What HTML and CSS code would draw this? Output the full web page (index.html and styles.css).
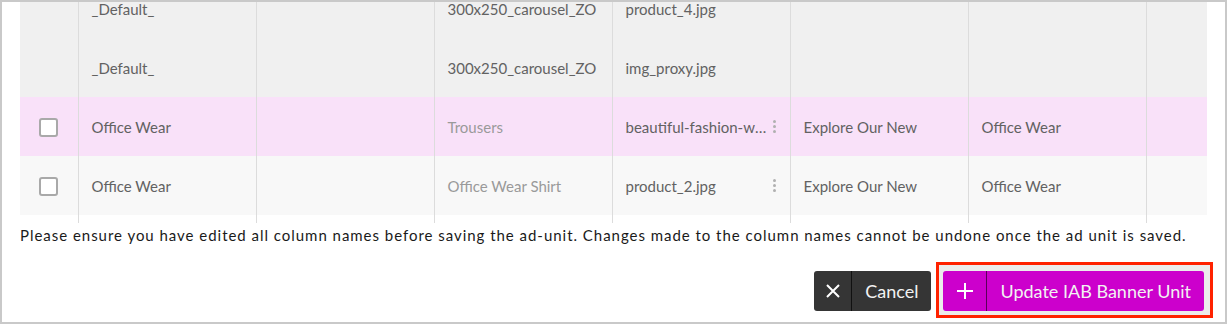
FILE: index.html
```html
<!DOCTYPE html>
<html>
<head>
<meta charset="utf-8">
<link rel="stylesheet" href="styles.css">
</head>
<body>
<div class="frame">
  <div class="table-wrap">
    <table class="grid">
      <colgroup>
        <col class="c-check"><col class="c-std"><col class="c-std"><col class="c-std"><col class="c-std"><col class="c-std"><col class="c-std"><col class="c-std">
      </colgroup>
      <tbody>
        <tr class="row-grey">
          <td></td><td>_Default_</td><td></td><td>300x250_carousel_ZO</td><td>product_4.jpg</td><td></td><td></td><td></td>
        </tr>
        <tr class="row-grey">
          <td></td><td>_Default_</td><td></td><td>300x250_carousel_ZO</td><td>img_proxy.jpg</td><td></td><td></td><td></td>
        </tr>
        <tr class="row-pink">
          <td class="check-cell"><span class="checkbox"></span></td>
          <td>Office Wear</td>
          <td></td>
          <td class="muted">Trousers</td>
          <td><div class="file"><span class="file-name">beautiful-fashion-woman-office-wear.jpg</span><span class="kebab"><i></i><i></i><i></i></span></div></td>
          <td>Explore Our New</td>
          <td>Office Wear</td>
          <td></td>
        </tr>
        <tr class="row-light">
          <td class="check-cell"><span class="checkbox"></span></td>
          <td>Office Wear</td>
          <td></td>
          <td class="muted">Office Wear Shirt</td>
          <td><div class="file"><span class="file-name">product_2.jpg</span><span class="kebab"><i></i><i></i><i></i></span></div></td>
          <td>Explore Our New</td>
          <td>Office Wear</td>
          <td></td>
        </tr>
        <tr class="row-spacer">
          <td></td><td></td><td></td><td></td><td></td><td></td><td></td><td></td>
        </tr>
      </tbody>
    </table>
  </div>
  <p class="notice">Please ensure you have edited all column names before saving the ad-unit. Changes made to the column names cannot be undone once the ad unit is saved.</p>
  <div class="actions">
    <button class="btn btn-dark">
      <span class="btn-icon">
        <svg width="14" height="14" viewBox="0 0 14 14"><path d="M1 1L13 13M13 1L1 13" stroke="#fff" stroke-width="2" fill="none"/></svg>
      </span>
      <span class="btn-label">Cancel</span>
    </button>
    <div class="highlight">
      <button class="btn btn-magenta">
        <span class="btn-icon btn-icon-wide">
          <svg width="18" height="18" viewBox="0 0 18 18"><path d="M9 1V17M1 9H17" stroke="#fff" stroke-width="2" fill="none"/></svg>
        </span>
        <span class="btn-label">Update IAB Banner Unit</span>
      </button>
    </div>
  </div>
</div>
</body>
</html>
```
FILE: styles.css
```css
* { box-sizing: border-box; }
html, body { margin: 0; padding: 0; background: #fff; }
body { font-family: "Lato", "Liberation Sans", sans-serif; }

.frame {
  width: 1227px;
  height: 324px;
  border: 2px solid #c9c9c9;
  padding: 0 18px;
  display: flex;
  flex-direction: column;
  overflow: hidden;
}

.table-wrap {
  width: 1187px;
  height: 222px;
  overflow: hidden;
  flex: none;
}

.grid {
  border-collapse: collapse;
  table-layout: fixed;
  width: 1304px;
  margin-top: -23px;
  font-size: 15px;
  color: #626262;
}
.c-check { width: 58px; }
.c-std { width: 178px; }

.grid td {
  height: 59px;
  padding: 0 13px;
  border-left: 1px solid #dcdcdc;
  white-space: nowrap;
  overflow: hidden;
  vertical-align: middle;
}
.grid td:first-child { border-left: none; }

.row-grey td { background: #f0f0f0; }
.row-pink td { background: #f9e1f9; }
.row-light td { background: #f8f8f8; }
.row-spacer td { height: 8px; background: #fff; }

.muted { color: #9a9a9a; }

.check-cell { text-align: center; padding: 0 !important; }
.checkbox {
  display: inline-block;
  width: 19px;
  height: 19px;
  border: 2px solid #a9a9a9;
  border-radius: 3px;
  background: #fff;
  vertical-align: middle;
}

.file {
  display: flex;
  align-items: center;
  gap: 5px;
}
.file-name {
  flex: 1;
  min-width: 0;
  overflow: hidden;
  text-overflow: ellipsis;
  white-space: nowrap;
}
.kebab {
  display: flex;
  flex-direction: column;
  gap: 2px;
  width: 3px;
  margin-right: 1px;
}
.kebab i {
  display: block;
  width: 3px;
  height: 3px;
  border-radius: 50%;
  background: #b0b0b0;
}

.notice {
  margin: 1px 0 0 0;
  font-size: 15px;
  line-height: 20px;
  color: #1a1a1a;
  letter-spacing: 0.97px;
  white-space: nowrap;
}

.actions {
  display: flex;
  justify-content: flex-end;
  align-items: flex-start;
  margin-top: 26px;
  margin-right: -6px;
  gap: 5px;
}

.highlight {
  border: 3px solid #ff2200;
  background: #ececec;
  padding: 6px 6px 4px 4px;
  margin-top: -9px;
}

.btn {
  display: flex;
  align-items: stretch;
  height: 40px;
  flex: none;
  border: none;
  border-radius: 3px;
  padding: 0;
  font-family: inherit;
  font-size: 18px;
  color: #f2f2f2;
  cursor: pointer;
}
.btn-dark { background: #353535; }
.btn-magenta { background: #cc00cc; }

.btn-icon {
  width: 38px;
  display: flex;
  align-items: center;
  justify-content: center;
  border-right: 1px solid #111;
}
.btn-icon-wide { width: 44px; border-right-color: #5a005a; }

.btn-label {
  display: flex;
  align-items: center;
  padding: 0 13px;
}
```
